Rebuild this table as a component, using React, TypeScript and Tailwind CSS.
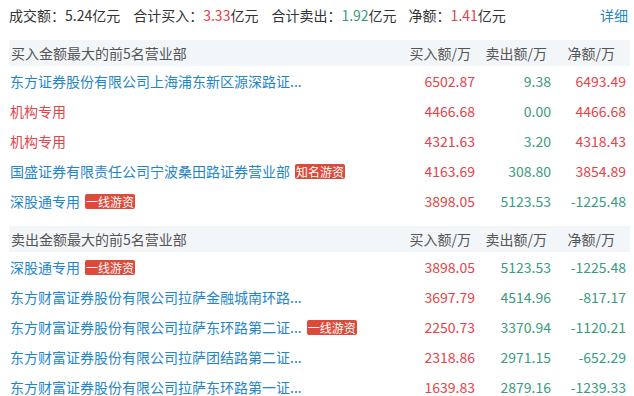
import React from 'react';

type Row = {
  name: string;
  tag?: string;
  nameColor?: 'blue' | 'red';
  buy: string;
  sell: string;
  net: string;
};

const buyRows: Row[] = [
  { name: '东方证券股份有限公司上海浦东新区源深路证...', buy: '6502.87', sell: '9.38', net: '6493.49' },
  { name: '机构专用', nameColor: 'red', buy: '4466.68', sell: '0.00', net: '4466.68' },
  { name: '机构专用', nameColor: 'red', buy: '4321.63', sell: '3.20', net: '4318.43' },
  { name: '国盛证券有限责任公司宁波桑田路证券营业部', tag: '知名游资', buy: '4163.69', sell: '308.80', net: '3854.89' },
  { name: '深股通专用', tag: '一线游资', buy: '3898.05', sell: '5123.53', net: '-1225.48' },
];

const sellRows: Row[] = [
  { name: '深股通专用', tag: '一线游资', buy: '3898.05', sell: '5123.53', net: '-1225.48' },
  { name: '东方财富证券股份有限公司拉萨金融城南环路...', buy: '3697.79', sell: '4514.96', net: '-817.17' },
  { name: '东方财富证券股份有限公司拉萨东环路第二证...', tag: '一线游资', buy: '2250.73', sell: '3370.94', net: '-1120.21' },
  { name: '东方财富证券股份有限公司拉萨团结路第二证...', buy: '2318.86', sell: '2971.15', net: '-652.29' },
  { name: '东方财富证券股份有限公司拉萨东环路第一证...', buy: '1639.83', sell: '2879.16', net: '-1239.33' },
];

const RED = 'text-[#e5434a]';
const GREEN = 'text-[#3a9c7d]';

const SectionHeader: React.FC<{ title: string }> = ({ title }) => (
  <div className="flex items-center h-[26px] bg-[#f3f6f9] text-[#555] pl-[2px]">
    <div className="flex-1">{title}</div>
    <div className="w-[76px] text-right pr-[4px]">买入额/万</div>
    <div className="w-[76px] text-right pr-[4px]">卖出额/万</div>
    <div className="w-[79px] text-right pr-[15px]">净额/万</div>
  </div>
);

const TableRow: React.FC<{ row: Row }> = ({ row }) => {
  const netNegative = row.net.startsWith('-');
  return (
    <div className="flex items-center h-[30px] pl-[1px]">
      <div className="flex-1 flex items-center gap-[5px] min-w-0 whitespace-nowrap">
        <span className={row.nameColor === 'red' ? RED : 'text-[#1f86c9]'}>{row.name}</span>
        {row.tag && (
          <span className="bg-[#de4a3a] text-white text-[12px] leading-[15px] px-[1px] rounded-[2px]">
            {row.tag}
          </span>
        )}
      </div>
      <div className={`w-[76px] text-right ${RED}`}>{row.buy}</div>
      <div className={`w-[76px] text-right ${GREEN}`}>{row.sell}</div>
      <div className={`w-[79px] text-right pr-[4px] ${netNegative ? GREEN : RED}`}>{row.net}</div>
    </div>
  );
};

export default function App() {
  return (
    <div
      className="w-[634px] h-[396px] bg-white overflow-hidden pl-[9px] pr-[4px] text-[14px] text-[#333]"
      style={{ fontFamily: '"Noto Sans CJK SC", "Noto Sans", sans-serif' }}
    >
      {/* Summary */}
      <div className="flex items-center h-[30px] pr-[2px]">
        <span>成交额：5.24亿元</span>
        <span className="ml-[13px]">
          合计买入：<span className={RED}>3.33</span>亿元
        </span>
        <span className="ml-[13px]">
          合计卖出：<span className={GREEN}>1.92</span>亿元
        </span>
        <span className="ml-[12px]">
          净额：<span className={RED}>1.41</span>亿元
        </span>
        <span className="ml-auto text-[#1f86c9]">详细</span>
      </div>

      <div className="mt-[10px]">
        <SectionHeader title="买入金额最大的前5名营业部" />
        {buyRows.map((r, i) => (
          <TableRow key={i} row={r} />
        ))}
      </div>

      <div className="mt-[10px]">
        <SectionHeader title="卖出金额最大的前5名营业部" />
        {sellRows.map((r, i) => (
          <TableRow key={i} row={r} />
        ))}
      </div>
    </div>
  );
}
